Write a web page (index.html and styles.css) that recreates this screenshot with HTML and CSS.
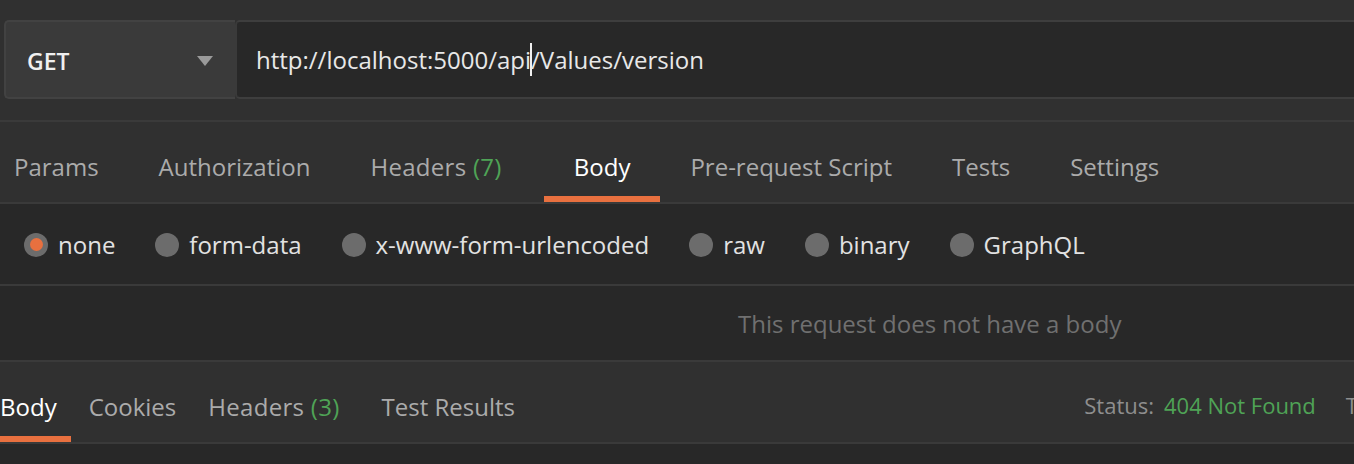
FILE: index.html
```html
<!DOCTYPE html>
<html>
<head>
<meta charset="utf-8">
<link rel="stylesheet" href="styles.css">
</head>
<body>
<div class="app">
  <div class="url-row">
    <div class="method">
      <span class="method-name">GET</span>
      <svg class="caret" width="16" height="10" viewBox="0 0 16 10"><path d="M0 0 L16 0 L8 10 Z" fill="#9a9a9a"/></svg>
    </div>
    <div class="url-input"><span>http://localhost:5000/api</span><span class="cursor"></span><span>/Values/version</span></div>
  </div>
  <div class="req-tabs">
    <div class="tab first">Params</div>
    <div class="tab">Authorization</div>
    <div class="tab headers">Headers <span class="count">(7)</span></div>
    <div class="tab active">Body</div>
    <div class="tab">Pre-request Script</div>
    <div class="tab">Tests</div>
    <div class="tab">Settings</div>
  </div>
  <div class="body-options">
    <div class="radio selected"><span class="dot"></span>none</div>
    <div class="radio"><span class="dot"></span>form-data</div>
    <div class="radio"><span class="dot"></span>x-www-form-urlencoded</div>
    <div class="radio"><span class="dot"></span>raw</div>
    <div class="radio"><span class="dot"></span>binary</div>
    <div class="radio"><span class="dot"></span>GraphQL</div>
  </div>
  <div class="empty-body">This request does not have a body</div>
  <div class="res-tabs">
    <div class="rtab active">Body</div>
    <div class="rtab">Cookies</div>
    <div class="rtab headers">Headers <span class="count">(3)</span></div>
    <div class="rtab">Test Results</div>
    <div class="status">
      <span class="label">Status:</span>
      <span class="value">404 Not Found</span>
      <span class="label time">Time:</span>
    </div>
  </div>
  <div class="res-body"></div>
</div>
</body>
</html>
```
FILE: styles.css
```css
html, body {
  margin: 0;
  padding: 0;
  background: #282828;
  overflow: hidden;
}
.app {
  width: 1354px;
  height: 464px;
  font-family: "Open Sans", "Noto Sans", sans-serif;
  background: #282828;
  overflow: hidden;
}
.url-row {
  display: flex;
  background: #303030;
  padding: 20px 0 21px 4px;
}
.method {
  width: 229px;
  height: 75px;
  box-sizing: content-box;
  background: #3a3a3a;
  border: 2px solid #424242;
  border-right: none;
  border-radius: 5px 0 0 5px;
  display: flex;
  align-items: center;
  justify-content: space-between;
}
.method-name {
  color: #f0f0f0;
  font-size: 23px;
  font-weight: 600;
  margin-left: 21px;
  padding-top: 2px;
}
.caret {
  margin-right: 22px;
  margin-top: 2px;
}
.url-input {
  flex: 1;
  height: 75px;
  background: #282828;
  border-top: 2px solid #3e3e3e;
  border-bottom: 2px solid #3e3e3e;
  border-left: 2px solid #3a3a3a;
  border-radius: 5px 0 0 5px;
  display: flex;
  align-items: center;
  padding-left: 19px;
  color: #e8e8e8;
  font-size: 24px;
  white-space: nowrap;
}
.cursor {
  display: inline-block;
  width: 2px;
  height: 33px;
  background: #f0f0f0;
  margin: 0 -1px 0 -1px;
}
.req-tabs {
  display: flex;
  height: 80px;
  background: #303030;
  border-top: 2px solid #3a3a3a;
  border-bottom: 2px solid #3a3a3a;
}
.tab {
  padding: 14px 30px 0;
  display: flex;
  align-items: center;
  font-size: 24px;
  color: #ababab;
  white-space: pre;
  box-sizing: border-box;
  border-bottom: 6px solid transparent;
}
.tab.first {
  padding-left: 14px;
}
.tab.headers {
  margin-right: 12px;
  letter-spacing: 0.3px;
}
.tab.active {
  color: #ffffff;
  border-bottom-color: #e8703f;
}
.count {
  color: #4fa356;
}
.body-options {
  display: flex;
  align-items: center;
  height: 80px;
  background: #282828;
  padding-left: 24px;
  border-bottom: 2px solid #3a3a3a;
  gap: 40px;
}
.radio {
  display: flex;
  align-items: center;
  font-size: 24px;
  color: #e2e2e2;
  gap: 10px;
  padding-top: 1px;
}
.dot {
  width: 24px;
  height: 24px;
  border-radius: 50%;
  background: #6c6c6c;
  display: flex;
  align-items: center;
  justify-content: center;
}
.radio.selected .dot::after {
  content: "";
  width: 13px;
  height: 13px;
  border-radius: 50%;
  background: #e8703f;
}
.empty-body {
  height: 74px;
  display: flex;
  align-items: center;
  padding-left: 738px;
  font-size: 24px;
  color: #707070;
  background: #282828;
  border-bottom: 2px solid #3a3a3a;
}
.res-tabs {
  display: flex;
  height: 80px;
  background: #303030;
  border-bottom: 2px solid #3a3a3a;
}
.rtab {
  padding: 14px 16px 0;
  display: flex;
  align-items: center;
  font-size: 24px;
  color: #ababab;
  white-space: pre;
  border-bottom: 6px solid transparent;
}
.rtab.active {
  padding-left: 0;
  padding-right: 14px;
  color: #ffffff;
  border-bottom-color: #e8703f;
}
.rtab.active + .rtab {
  padding-left: 18px;
}
.rtab.headers {
  margin-right: 10px;
  letter-spacing: 0.3px;
}
.status {
  margin-left: auto;
  display: flex;
  align-items: center;
  font-size: 22px;
  white-space: nowrap;
  padding-top: 6px;
  margin-right: -48px;
}
.status .label {
  color: #8e8e8e;
}
.status .value {
  color: #4fa356;
  margin-left: 10px;
}
.status .time {
  margin-left: 30px;
}
.res-body {
  height: 40px;
  background: #282828;
}
```
